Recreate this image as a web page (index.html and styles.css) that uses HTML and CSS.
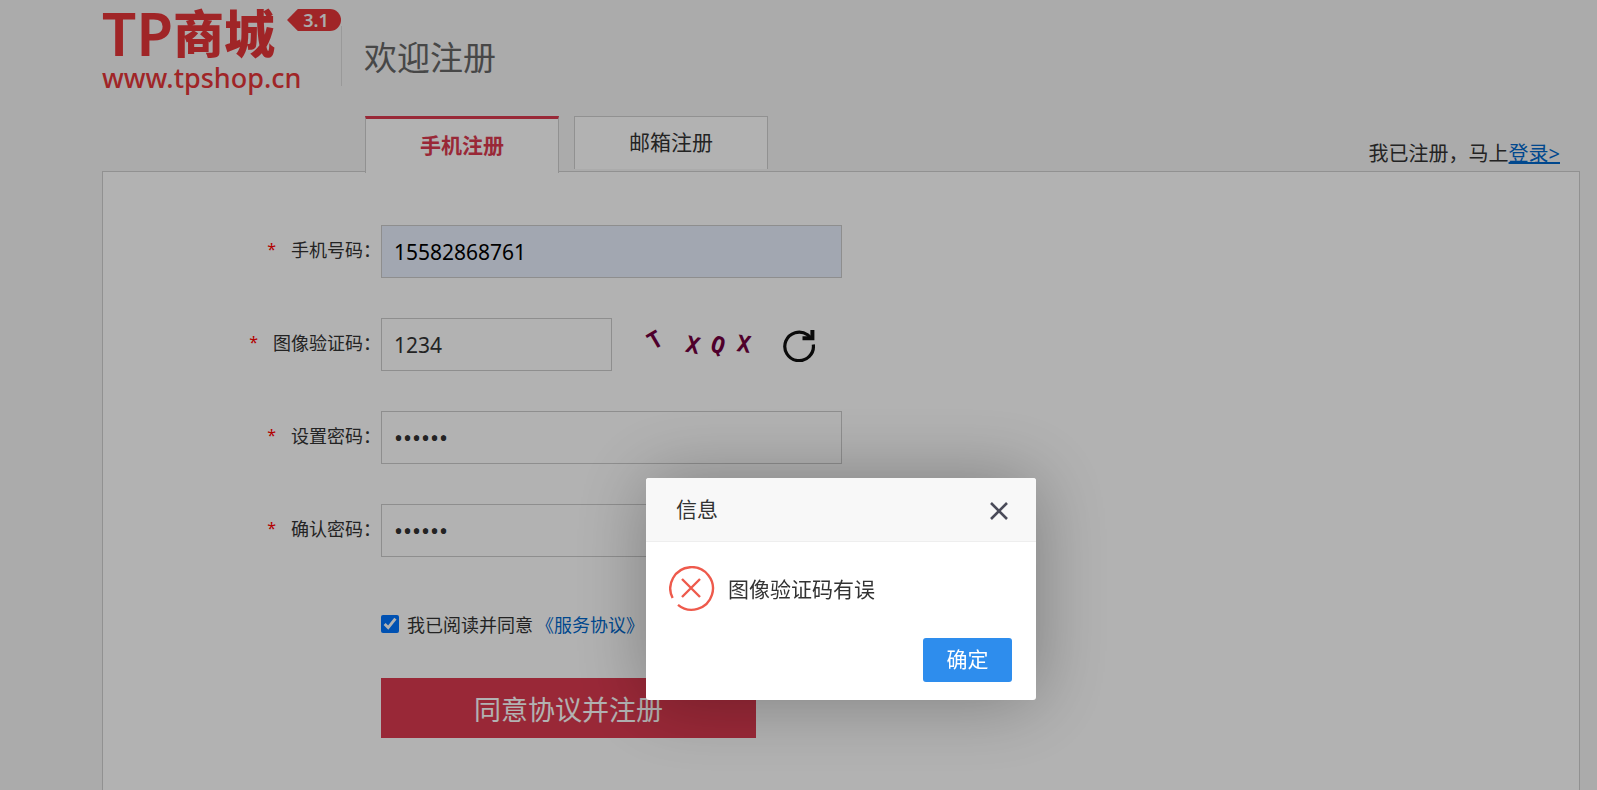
FILE: index.html
```html
<!DOCTYPE html>
<html lang="zh-CN">
<head>
    <meta charset="UTF-8">
    <meta name="viewport" content="width=device-width, initial-scale=1.0">
    <title>欢迎注册</title>
    <link rel="stylesheet" href="styles.css">
</head>
<body>

    <div class="container">
        <header class="header">
            <a href="#" class="logo">
                <span class="logo-top">
                    <span class="logo-tp">TP</span>
                    <span class="logo-name">商城</span>
                </span>
                <span class="logo-url">www.tpshop.cn</span>
                <span class="logo-version">3.1</span>
            </a>
            <h1 class="title">欢迎注册</h1>
        </header>

        <div class="tabs">
            <button type="button" class="tab active">手机注册</button>
            <button type="button" class="tab">邮箱注册</button>
            <p class="login-tip">我已注册，马上<a href="#">登录&gt;</a></p>
        </div>

        <form class="panel" id="regForm">
            <div class="row">
                <label class="label" for="mobile"><em>*</em>手机号码：</label>
                <input type="text" id="mobile" class="input autofill" value="15582868761">
            </div>
            <div class="row">
                <label class="label" for="code"><em>*</em>图像验证码：</label>
                <input type="text" id="code" class="input short" value="1234">
                <svg class="captcha" width="120" height="40" viewBox="0 0 120 40">
                    <text transform="translate(18 15) rotate(-30)" y="8">T</text>
                    <text transform="translate(56 20) rotate(12)" y="8">X</text>
                    <text transform="translate(81 20) rotate(18)" y="8">Q</text>
                    <text transform="translate(107 19) rotate(8)" y="8">X</text>
                </svg>
                <button type="button" class="refresh" aria-label="刷新">
                    <svg width="34" height="34" viewBox="0 0 34 34" fill="none" stroke="#111">
                        <path d="M31.3 16.5A14.3 14.3 0 1 1 25.5 6.8L29 10" stroke-width="3.2"/>
                        <path d="M20.5 10.2H30.4V2" stroke-width="4"/>
                    </svg>
                </button>
            </div>
            <div class="row">
                <label class="label" for="password"><em>*</em>设置密码：</label>
                <input type="password" id="password" class="input" value="123456">
            </div>
            <div class="row">
                <label class="label" for="password2"><em>*</em>确认密码：</label>
                <input type="password" id="password2" class="input" value="123456">
            </div>
            <div class="agree">
                <input type="checkbox" id="agree" checked>
                <label for="agree">我已阅读并同意</label><a href="#">《服务协议》</a>
            </div>
            <button type="submit" class="submit">同意协议并注册</button>
        </form>
    </div>

    <div class="shade" id="shade">
        <div class="dialog" role="dialog" aria-labelledby="dialogTitle">
            <div class="dialog-header">
                <h2 id="dialogTitle">信息</h2>
                <button type="button" class="dialog-close" aria-label="关闭" onclick="closeDialog()">
                    <svg width="18" height="20" viewBox="0 0 18 20">
                        <path d="M1 3L17 19M17 3L1 19" stroke="#4a4b59" stroke-width="2.6"/>
                    </svg>
                </button>
            </div>
            <div class="dialog-content">
                <svg width="46" height="46" viewBox="0 0 46 46" fill="none" stroke="#ee5a4c">
                    <path d="M3.6 32A21.3 21.3 0 1 1 9 38.8" stroke-width="2.4"/>
                    <path d="M13 13L31 31M31 13L13 31" stroke-width="2.4"/>
                </svg>
                <p>图像验证码有误</p>
            </div>
            <div class="dialog-footer">
                <button type="button" class="dialog-ok" onclick="closeDialog()">确定</button>
            </div>
        </div>
    </div>

    <script>
        function closeDialog() {
            document.getElementById('shade').style.display = 'none';
        }

        document.getElementById('regForm').addEventListener('submit', function (e) {
            e.preventDefault();
            document.getElementById('shade').style.display = 'flex';
        });
    </script>

</body>
</html>
```
FILE: styles.css
```css
* {
    box-sizing: border-box;
}

body {
    margin: 0;
    background-color: #f5f5f5;
    color: #333;
    font-family: "Noto Sans", "Noto Sans CJK SC", sans-serif;
    font-size: 18px;
}

h1, h2, p {
    margin: 0;
    font-weight: normal;
}

button, input {
    font-family: inherit;
    color: inherit;
}

button {
    padding: 0;
    border: none;
    background: none;
    cursor: pointer;
}

a {
    color: #0068cc;
}

.container {
    display: flex;
    flex-direction: column;
    min-height: 100vh;
    margin: 0 17px 0 102px;
}

/* header */
.header {
    display: flex;
    height: 116px;
}

.logo {
    position: relative;
    width: 240px;
    height: 86px;
    color: #e53639;
    text-decoration: none;
    white-space: nowrap;
}

.logo::after {
    content: "";
    position: absolute;
    right: 0;
    top: 26px;
    height: 60px;
    border-right: 1px solid #dcdcdc;
}

.logo-top {
    display: flex;
    align-items: center;
    height: 62px;
}

.logo-tp {
    line-height: 62px;
    padding-top: 4px;
    font-size: 60px;
    font-weight: 600;
}

.logo-name {
    line-height: 62px;
    font-family: "Noto Sans CJK SC", sans-serif;
    font-size: 51px;
    font-weight: 900;
}

.logo-url {
    display: block;
    line-height: 32px;
    font-size: 27px;
    font-weight: 500;
}

.logo-version {
    position: absolute;
    top: 9px;
    right: 1px;
    width: 54px;
    height: 22px;
    padding-left: 4px;
    line-height: 22px;
    font-size: 18px;
    font-weight: 600;
    text-align: center;
    color: #f5f5f5;
    background-color: #e53639;
    border-radius: 11px;
    clip-path: polygon(0 50%, 20% 0, 100% 0, 100% 100%, 20% 100%);
}

.title {
    padding: 34px 0 0 22px;
    line-height: 48px;
    font-size: 33px;
    color: #666;
}

/* tabs */
.tabs {
    display: flex;
    align-items: flex-start;
    gap: 15px;
    height: 55px;
    padding: 0 20px 0 263px;
}

.tab {
    width: 194px;
    height: 53px;
    padding-bottom: 4px;
    border: 1px solid #d0d0d0;
    border-bottom: none;
    background-color: #fff;
    font-size: 21px;
}

.tab.active {
    position: relative;
    height: 57px;
    border-top: 3px solid #dc3a50;
    color: #dc3a50;
    font-weight: bold;
}

.login-tip {
    margin: 23px 0 0 auto;
    line-height: 30px;
    font-size: 20px;
}

/* form */
.panel {
    flex: 1;
    padding: 53px 0 0 120px;
    border: 1px solid #d0d0d0;
    border-bottom: none;
    background-color: #fff;
}

.row {
    display: flex;
    align-items: center;
    height: 53px;
    margin-bottom: 40px;
}

.label {
    width: 158px;
    padding-bottom: 5px;
    text-align: right;
    white-space: nowrap;
}

.label em {
    margin-right: 15px;
    font-size: 16px;
    font-style: normal;
    vertical-align: 2px;
    color: #f00;
}

.input {
    width: 461px;
    height: 53px;
    padding: 0 12px;
    border: 1px solid #ccc;
    background-color: #fff;
    font-size: 21px;
}

.input[type="password"] {
    font-size: 24px;
}

.input.short {
    width: 231px;
}

.input.autofill {
    background-color: #e8f0fe;
    color: #000;
}

.captcha {
    margin-left: 25px;
    font-family: "DejaVu Sans Mono", monospace;
    font-size: 23px;
    font-weight: bold;
    text-anchor: middle;
    fill: #720040;
}

.refresh {
    height: 34px;
    margin-left: 25px;
}

.agree {
    display: flex;
    align-items: center;
    height: 28px;
    margin: 53px 0 40px 158px;
}

.agree input {
    width: 18px;
    height: 18px;
    margin: 0 8px 0 0;
}

.agree a {
    margin-left: 3px;
    text-decoration: none;
}

.submit {
    display: block;
    width: 375px;
    height: 60px;
    margin-left: 158px;
    background-color: #dc3a50;
    color: #fff;
    font-size: 27px;
}

/* dialog */
.shade {
    position: fixed;
    inset: 0;
    display: flex;
    justify-content: center;
    align-items: flex-start;
    padding: 478px 0 0 85px;
    background-color: rgba(0, 0, 0, 0.3);
}

.dialog {
    width: 390px;
    border-radius: 3px;
    background-color: #fff;
    box-shadow: 1px 1px 75px rgba(0, 0, 0, 0.3);
}

.dialog-header {
    display: flex;
    justify-content: space-between;
    align-items: center;
    height: 64px;
    padding: 0 28px 0 30px;
    border-bottom: 1px solid #eee;
    border-radius: 3px 3px 0 0;
    background-color: #f8f8f8;
}

.dialog-header h2 {
    padding-bottom: 4px;
    font-size: 21px;
}

.dialog-close {
    height: 20px;
}

.dialog-close svg, .refresh svg {
    display: block;
}

.dialog-content {
    display: flex;
    align-items: center;
    gap: 13px;
    padding: 24px 23px 0;
    font-size: 21px;
}

.dialog-content p {
    line-height: 46px;
}

.dialog-footer {
    display: flex;
    justify-content: flex-end;
    padding: 26px 24px 18px;
}

.dialog-ok {
    width: 89px;
    height: 44px;
    padding-bottom: 4px;
    border-radius: 3px;
    background-color: #2e8ded;
    color: #fff;
    font-size: 21px;
}
```
